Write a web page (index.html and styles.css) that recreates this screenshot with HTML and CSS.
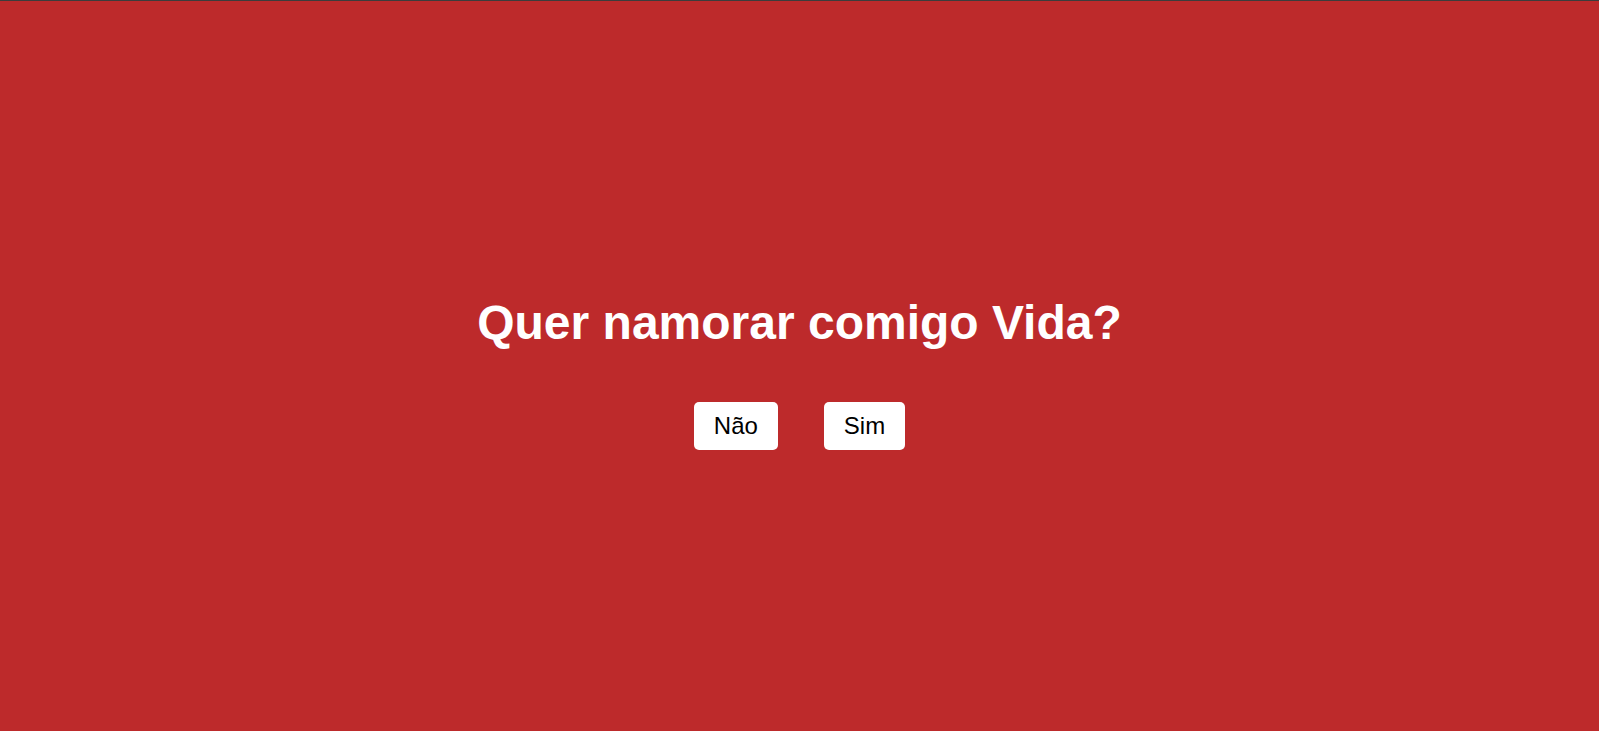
FILE: index.html
```html
<!DOCTYPE html>
<html lang="pt-BR">
<head>
<meta charset="utf-8">
<title>Quer namorar comigo Vida?</title>
<link rel="stylesheet" href="styles.css">
</head>
<body>
<main class="page">
  <h1 class="question">Quer namorar comigo Vida?</h1>
  <div class="actions">
    <button class="btn" type="button">Não</button>
    <button class="btn" type="button">Sim</button>
  </div>
</main>
</body>
</html>
```

FILE: styles.css
```css
html, body {
  margin: 0;
  padding: 0;
  height: 100%;
}

body {
  background: #bd2a2b;
  font-family: "Liberation Sans", Arial, sans-serif;
  border-top: 1px solid #3c3c3c;
  box-sizing: border-box;
}

.page {
  height: 100%;
  box-sizing: border-box;
  display: flex;
  flex-direction: column;
  align-items: center;
  justify-content: center;
  padding-top: 13px;
}

.question {
  margin: 0 0 52px 0;
  color: #ffffff;
  font-size: 48px;
  font-weight: bold;
  line-height: normal;
  text-align: center;
}

.actions {
  display: flex;
  gap: 46px;
}

.btn {
  background: #ffffff;
  color: #000000;
  border: none;
  border-radius: 5px;
  font-family: "Liberation Sans", Arial, sans-serif;
  font-size: 24px;
  line-height: 28px;
  padding: 10px 20px;
  margin: 0;
  cursor: pointer;
}
```
